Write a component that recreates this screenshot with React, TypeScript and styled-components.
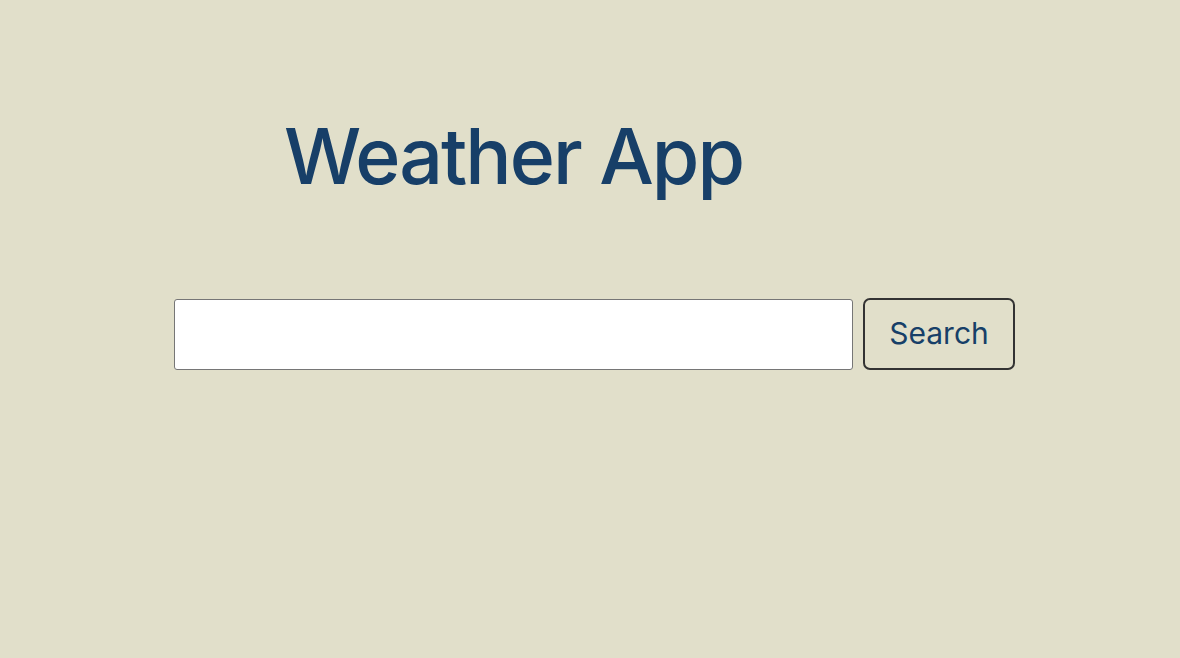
import React from "react";
import styled, { createGlobalStyle } from "styled-components";

const Global = createGlobalStyle`
  html, body { margin: 0; padding: 0; background: #e1dfca; }
  body { font-family: Inter, "Noto Sans", sans-serif; }
`;

const Page = styled.main`
  min-height: 658px;
  display: flex;
  flex-direction: column;
  padding-top: 110px;
  box-sizing: border-box;
`;

const Title = styled.h1`
  margin: 0 0 0 284px;
  font-size: 77px;
  font-weight: 500;
  line-height: 93px;
  color: #173f68;
  letter-spacing: -2px;
`;

const Form = styled.form`
  display: flex;
  align-items: center;
  gap: 10px;
  margin: 95px 0 0 174px;
`;

const Input = styled.input`
  width: 679px;
  height: 71px;
  box-sizing: border-box;
  border: 1px solid #767676;
  border-radius: 3px;
  background: #fff;
  font-family: Inter, sans-serif;
  font-size: 28px;
  padding: 0 12px;
`;

const Button = styled.button`
  width: 152px;
  height: 72px;
  box-sizing: border-box;
  border: 2px solid #333;
  border-radius: 7px;
  background: transparent;
  color: #173f68;
  font-family: Inter, sans-serif;
  font-size: 30px;
  padding: 0 0 2px 0;
  cursor: pointer;
`;

export default function App() {
  return (
    <>
      <Global />
      <Page>
        <Title>Weather App</Title>
        <Form onSubmit={(e) => e.preventDefault()}>
          <Input type="text" />
          <Button type="submit">Search</Button>
        </Form>
      </Page>
    </>
  );
}
